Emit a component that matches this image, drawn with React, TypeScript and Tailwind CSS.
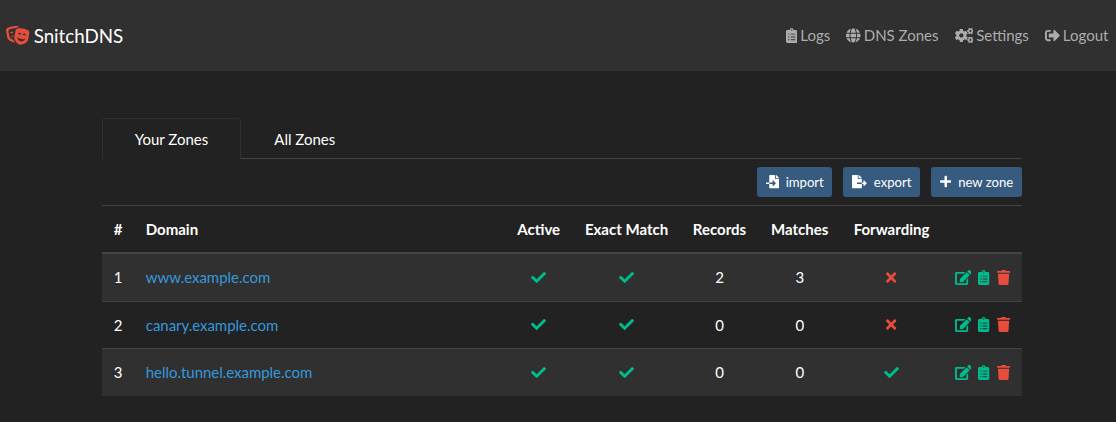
import type { ReactNode } from 'react';
import {
  FaCheck,
  FaClipboardList,
  FaCogs,
  FaEdit,
  FaFileExport,
  FaFileImport,
  FaGlobe,
  FaPlus,
  FaSignOutAlt,
  FaTheaterMasks,
  FaTimes,
  FaTrash,
} from 'react-icons/fa';

type Zone = {
  id: number;
  domain: string;
  active: boolean;
  exact: boolean;
  records: number;
  matches: number;
  forwarding: boolean;
};

const zones: Zone[] = [
  { id: 1, domain: 'www.example.com', active: true, exact: true, records: 2, matches: 3, forwarding: false },
  { id: 2, domain: 'canary.example.com', active: true, exact: true, records: 0, matches: 0, forwarding: false },
  { id: 3, domain: 'hello.tunnel.example.com', active: true, exact: true, records: 0, matches: 0, forwarding: true },
];

function NavLink({ icon, children }: { icon: ReactNode; children: ReactNode }) {
  return (
    <a href="#" className="flex items-center gap-[3px] py-2 pr-[7.6px] pl-[8.4px] text-[#acacac]">
      {icon}
      <span>{children}</span>
    </a>
  );
}

function Button({ icon, children }: { icon: ReactNode; children: ReactNode }) {
  return (
    <button className="flex h-[30px] items-center gap-[7px] rounded-[3px] bg-[#375a7f] px-[8.6px] text-[13.125px] leading-[19.7px] text-white">
      {icon}
      <span className="pt-px">{children}</span>
    </button>
  );
}

function Flag({ on }: { on: boolean }) {
  return on ? (
    <FaCheck className="mx-auto block size-[15px] text-[#00bc8c]" />
  ) : (
    <FaTimes className="mx-auto block h-[15px] w-[10.3px] text-[#e74c3c]" viewBox="0 0 352 512" />
  );
}

export default function App() {
  return (
    <div className="min-h-[422px] bg-[#222] font-['Lato',sans-serif] text-[15px] leading-[22.5px] text-white">
      <nav className="flex h-[71px] items-center justify-between bg-[#303030] pl-[6.3px]">
        <a href="#" className="flex items-center gap-1 text-[18.75px] leading-7">
          <FaTheaterMasks className="h-[18.75px] w-[23.4px] text-[#e74c3c]" />
          <span>SnitchDNS</span>
        </a>
        <div className="flex">
          <NavLink icon={<FaClipboardList className="h-[15px] w-[11.25px]" />}>Logs</NavLink>
          <NavLink icon={<FaGlobe className="h-[15px] w-[14.5px]" />}>DNS Zones</NavLink>
          <NavLink icon={<FaCogs className="h-[15px] w-[18.75px]" />}>Settings</NavLink>
          <NavLink icon={<FaSignOutAlt className="size-[15px]" />}>Logout</NavLink>
        </div>
      </nav>

      <main className="ml-[101.75px] w-[920px] pt-[47px]">
        <div className="flex h-[41px] border-b border-[#444]">
          <a href="#" className="h-[41px] rounded-t-[4px] border border-b-0 border-[#303030] bg-[#222] px-8 pt-[9px]">
            Your Zones
          </a>
          <a href="#" className="px-[33px] pt-2.5">
            All Zones
          </a>
        </div>

        <div className="flex justify-end gap-[11px] py-2">
          <Button icon={<FaFileImport className="size-[13.125px]" />}>import</Button>
          <Button icon={<FaFileExport className="h-[13.125px] w-[14.8px]" />}>export</Button>
          <Button icon={<FaPlus className="h-[13.125px] w-[11.5px]" />}>new zone</Button>
        </div>

        <table className="w-full table-fixed border-collapse">
          <colgroup>
            <col className="w-[32px]" />
            <col className="w-[371px]" />
            <col className="w-[68px]" />
            <col className="w-[107.5px]" />
            <col className="w-[78.5px]" />
            <col className="w-[82px]" />
            <col className="w-[101.5px]" />
            <col className="w-[79.5px]" />
          </colgroup>
          <thead>
            <tr className="h-[47.5px] border-t border-b-2 border-[#444] whitespace-nowrap">
              <th className="pl-3 text-left">#</th>
              <th className="pl-3 text-left">Domain</th>
              <th>Active</th>
              <th>Exact Match</th>
              <th>Records</th>
              <th>Matches</th>
              <th>Forwarding</th>
              <th />
            </tr>
          </thead>
          <tbody>
            {zones.map((zone) => (
              <tr key={zone.id} className="h-[47.5px] border-t border-[#444] text-center odd:bg-[#303030] first:h-[48px] first:border-t-2">
                <td className="pl-3 text-left">{zone.id}</td>
                <td className="pl-3 text-left">
                  <a href="#" className="tracking-[-0.03px] text-[#3498db]">{zone.domain}</a>
                </td>
                <td><Flag on={zone.active} /></td>
                <td><Flag on={zone.exact} /></td>
                <td>{zone.records}</td>
                <td>{zone.matches}</td>
                <td><Flag on={zone.forwarding} /></td>
                <td>
                  <div className="flex items-center justify-end gap-[7px] pr-3">
                    <FaEdit className="h-[15px] w-[16.9px] text-[#00bc8c]" />
                    <FaClipboardList className="h-[15px] w-[11.25px] text-[#00bc8c]" />
                    <FaTrash className="h-[15px] w-[13.1px] text-[#e74c3c]" />
                  </div>
                </td>
              </tr>
            ))}
          </tbody>
        </table>
      </main>
    </div>
  );
}
